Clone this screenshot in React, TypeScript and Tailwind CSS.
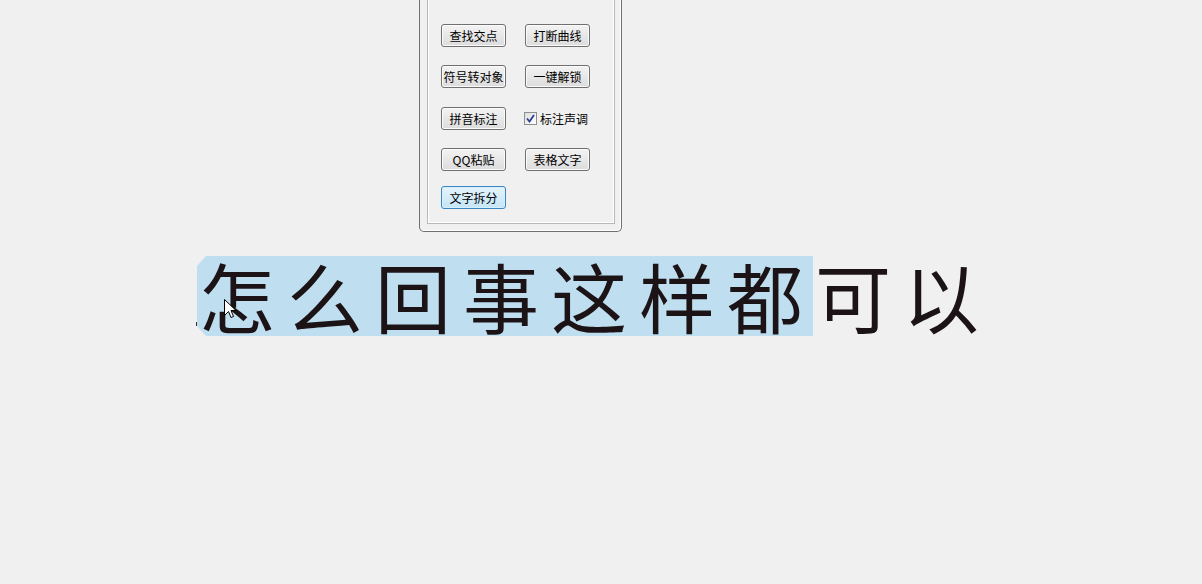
import React from 'react';

const cjk = { fontFamily: '"Noto Sans CJK SC", "Noto Sans", sans-serif' };

const WinButton: React.FC<{ label: string; focused?: boolean }> = ({ label, focused }) => (
  <button
    className={`w-[65px] h-[23px] rounded-[3px] border text-[12px] leading-none text-black flex items-center justify-center ${
      focused
        ? 'border-[#3a86c2] bg-gradient-to-b from-[#e5f4fc] to-[#c4e5f6] shadow-[inset_0_0_0_1px_#d8f0fc]'
        : 'border-[#707070] bg-gradient-to-b from-[#f3f3f3] to-[#dcdcdc] shadow-[inset_0_0_0_1px_#fbfbfb]'
    }`}
    style={cjk}
  >
    {label}
  </button>
);

const Checkbox: React.FC<{ label: string }> = ({ label }) => (
  <div className="flex items-center gap-[3px] w-[65px] h-[23px] -ml-[1px]">
    <span className="w-[13px] h-[13px] border border-[#8e8f8f] bg-gradient-to-br from-[#dcdcdc] to-[#ffffff] flex items-center justify-center">
      <svg width="9" height="9" viewBox="0 0 9 9">
        <path d="M1 4.5 L3.5 7.5 L8 1" fill="none" stroke="#2a3f8f" strokeWidth="1.8" />
      </svg>
    </span>
    <span className="text-[12px] text-black leading-none" style={cjk}>{label}</span>
  </div>
);

const Cursor = () => (
  <svg className="absolute left-[224px] top-[299px]" width="13" height="21" viewBox="0 0 13 21">
    <path d="M0.5 0.5 L0.5 16.5 L4.5 12.5 L7 18.5 L9.5 17.5 L7 11.5 L12 11.5 Z" fill="#fff" stroke="#000" strokeWidth="1" />
  </svg>
);

const chars = ['怎', '么', '回', '事', '这', '样', '都', '可', '以'];

const Glyph: React.FC<{ c: string }> = ({ c }) => (
  <span className="block w-[88px] h-[80px] text-[76px] leading-[78px] pl-[2px] text-[#1b1315]" style={cjk}>
    {c}
  </span>
);

export default function App() {
  return (
    <div className="relative w-[1202px] h-[584px] bg-[#f0f0f0] overflow-hidden">
      {/* tool panel */}
      <div className="ml-[419px] w-[203px] h-[232px] border border-t-0 border-[#6f6f6f] rounded-b-[5px] pl-[7px] pr-[7px] pb-[7px] shadow-[inset_-1px_-1px_0_#ffffff]">
        <div className="w-[188px] h-full border border-t-0 border-[#b9b9b9] shadow-[inset_1px_0_0_#ffffff,inset_-1px_-1px_0_#ffffff] pl-[13px] pt-[24px]">
          <div className="flex flex-col">
            <div className="flex gap-[19px]">
              <WinButton label="查找交点" />
              <WinButton label="打断曲线" />
            </div>
            <div className="flex gap-[19px] mt-[18px]">
              <WinButton label="符号转对象" />
              <WinButton label="一键解锁" />
            </div>
            <div className="flex gap-[19px] mt-[19px]">
              <WinButton label="拼音标注" />
              <Checkbox label="标注声调" />
            </div>
            <div className="flex gap-[19px] mt-[18px]">
              <WinButton label="QQ粘贴" />
              <WinButton label="表格文字" />
            </div>
            <div className="flex gap-[19px] mt-[15px]">
              <WinButton label="文字拆分" focused />
            </div>
          </div>
        </div>
      </div>

      {/* big text line */}
      <div className="mt-[24px] pl-[197px] flex h-[80px]">
        <div className="flex bg-[#bfdff0] [clip-path:polygon(9px_0,100%_0,100%_100%,9px_100%,0_calc(100%-10px),0_10px)]">
          {chars.slice(0, 7).map((c, i) => (
            <Glyph key={i} c={c} />
          ))}
        </div>
        {chars.slice(7).map((c, i) => (
          <Glyph key={i} c={c} />
        ))}
      </div>

      <span className="absolute left-[196px] top-[322px] w-[1px] h-[4px] bg-[#333]" />
      <Cursor />
    </div>
  );
}
